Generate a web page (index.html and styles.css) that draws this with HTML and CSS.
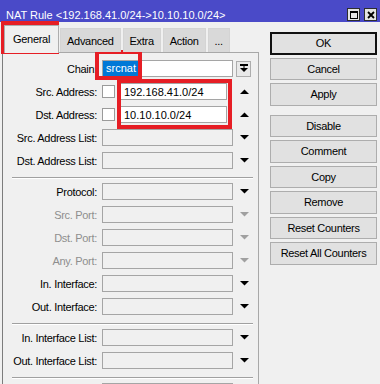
FILE: index.html
```html
<!DOCTYPE html>
<html lang="en">
<head>
    <meta charset="UTF-8">
    <title>NAT Rule</title>
    <link rel="stylesheet" href="styles.css">
</head>
<body>
    <div class="window">
        <div class="titlebar">
            <span class="title">NAT Rule &lt;192.168.41.0/24-&gt;10.10.10.0/24&gt;</span>
            <div class="win-btns">
                <span class="win-btn">
                    <svg width="8" height="8" viewBox="0 0 8 8"><rect x="0.5" y="0.5" width="7" height="7" fill="none" stroke="#000"/><rect x="0" y="0" width="8" height="2" fill="#000"/></svg>
                </span>
                <span class="win-btn">
                    <svg width="8" height="8" viewBox="0 0 8 8"><path d="M1 1L7 7M7 1L1 7" stroke="#000" stroke-width="1.8"/></svg>
                </span>
            </div>
        </div>

        <div class="main">
            <div class="left">
                <div class="tabs">
                    <div class="tab active">General</div>
                    <div class="tab">Advanced</div>
                    <div class="tab">Extra</div>
                    <div class="tab">Action</div>
                    <div class="tab">...</div>
                </div>
                <div class="panel">
                    <div class="row">
                        <span class="lbl">Chain:</span>
                        <span class="field white"><span class="sel">srcnat</span></span>
                        <span class="dd-btn">
                            <svg width="8" height="9" viewBox="0 0 8 9"><rect x="0" y="0" width="8" height="2" fill="#000"/><rect x="3.5" y="2" width="1" height="2" fill="#000"/><polygon points="0,4 8,4 4,8" fill="#000"/></svg>
                        </span>
                    </div>
                    <div class="row">
                        <span class="lbl">Src. Address:</span>
                        <span class="check"></span>
                        <span class="field white addr">192.168.41.0/24</span>
                        <span class="arrow"><svg width="9" height="5" viewBox="0 0 9 5"><polygon points="0,5 9,5 4.5,0.5" fill="#000"/></svg></span>
                    </div>
                    <div class="row">
                        <span class="lbl">Dst. Address:</span>
                        <span class="check"></span>
                        <span class="field white addr">10.10.10.0/24</span>
                        <span class="arrow"><svg width="9" height="5" viewBox="0 0 9 5"><polygon points="0,5 9,5 4.5,0.5" fill="#000"/></svg></span>
                    </div>
                    <div class="row">
                        <span class="lbl">Src. Address List:</span>
                        <span class="field"></span>
                        <span class="arrow"><svg width="9" height="5" viewBox="0 0 9 5"><polygon points="0,0 9,0 4.5,4.5" fill="#000"/></svg></span>
                    </div>
                    <div class="row">
                        <span class="lbl">Dst. Address List:</span>
                        <span class="field"></span>
                        <span class="arrow"><svg width="9" height="5" viewBox="0 0 9 5"><polygon points="0,0 9,0 4.5,4.5" fill="#000"/></svg></span>
                    </div>

                    <div class="sep"></div>

                    <div class="row">
                        <span class="lbl">Protocol:</span>
                        <span class="field"></span>
                        <span class="arrow"><svg width="9" height="5" viewBox="0 0 9 5"><polygon points="0,0 9,0 4.5,4.5" fill="#000"/></svg></span>
                    </div>
                    <div class="row off">
                        <span class="lbl">Src. Port:</span>
                        <span class="field"></span>
                        <span class="arrow"><svg width="9" height="5" viewBox="0 0 9 5"><polygon points="0,0 9,0 4.5,4.5" fill="#a0a0a0"/></svg></span>
                    </div>
                    <div class="row off">
                        <span class="lbl">Dst. Port:</span>
                        <span class="field"></span>
                        <span class="arrow"><svg width="9" height="5" viewBox="0 0 9 5"><polygon points="0,0 9,0 4.5,4.5" fill="#a0a0a0"/></svg></span>
                    </div>
                    <div class="row off">
                        <span class="lbl">Any. Port:</span>
                        <span class="field"></span>
                        <span class="arrow"><svg width="9" height="5" viewBox="0 0 9 5"><polygon points="0,0 9,0 4.5,4.5" fill="#a0a0a0"/></svg></span>
                    </div>
                    <div class="row">
                        <span class="lbl">In. Interface:</span>
                        <span class="field"></span>
                        <span class="arrow"><svg width="9" height="5" viewBox="0 0 9 5"><polygon points="0,0 9,0 4.5,4.5" fill="#000"/></svg></span>
                    </div>
                    <div class="row">
                        <span class="lbl">Out. Interface:</span>
                        <span class="field"></span>
                        <span class="arrow"><svg width="9" height="5" viewBox="0 0 9 5"><polygon points="0,0 9,0 4.5,4.5" fill="#000"/></svg></span>
                    </div>

                    <div class="sep"></div>

                    <div class="row">
                        <span class="lbl">In. Interface List:</span>
                        <span class="field"></span>
                        <span class="arrow"><svg width="9" height="5" viewBox="0 0 9 5"><polygon points="0,0 9,0 4.5,4.5" fill="#000"/></svg></span>
                    </div>
                    <div class="row">
                        <span class="lbl">Out. Interface List:</span>
                        <span class="field"></span>
                        <span class="arrow"><svg width="9" height="5" viewBox="0 0 9 5"><polygon points="0,0 9,0 4.5,4.5" fill="#000"/></svg></span>
                    </div>

                    <div class="sep"></div>

                    <div class="row">
                        <span class="lbl"></span>
                        <span class="field"></span>
                    </div>
                </div>
            </div>

            <div class="actions">
                <button class="btn default">OK</button>
                <button class="btn">Cancel</button>
                <button class="btn">Apply</button>
                <button class="btn group">Disable</button>
                <button class="btn">Comment</button>
                <button class="btn">Copy</button>
                <button class="btn">Remove</button>
                <button class="btn">Reset Counters</button>
                <button class="btn">Reset All Counters</button>
            </div>
        </div>

        <!-- red highlight boxes drawn over the dialog -->
        <div class="mark mark-tab"></div>
        <div class="mark mark-chain"></div>
        <div class="mark mark-addr"></div>
    </div>
</body>
</html>
```

FILE: styles.css
```css
body {
    margin: 0;
    padding: 0;
    background-color: #f0f0f0;
    font-family: "Liberation Sans", Arial, sans-serif;
    font-size: 11px;
    color: #000;
    overflow: hidden;
}

.window {
    position: relative;
    width: 380px;
    height: 384px;
    overflow: hidden;
}

.titlebar {
    height: 22px;
    box-sizing: border-box;
    display: flex;
    align-items: flex-end;
    padding: 0 3px 0 6px;
    background-color: #4a4ac8;
    color: #fff;
}

.title {
    flex: 1;
    line-height: 13px;
}

.win-btns {
    display: flex;
    gap: 4px;
    margin-bottom: 1px;
}

.win-btn {
    width: 13px;
    height: 13px;
    box-sizing: border-box;
    border: 1px solid #2e2e2e;
    background-color: #e4e4e4;
    display: flex;
    align-items: center;
    justify-content: center;
}

.main {
    display: flex;
}

.left {
    width: 257px;
    margin-left: 2px;
}

.tabs {
    display: flex;
    align-items: flex-end;
    height: 30px;
    padding-left: 4px;
    position: relative;
    z-index: 1;
}

.tab {
    height: 24px;
    box-sizing: border-box;
    padding: 0 6px;
    margin-right: 2px;
    border: 1px solid #d4d4d4;
    border-bottom: none;
    background-color: #d9d9d9;
    line-height: 25px;
    letter-spacing: -0.3px;
}

.tab.active {
    height: 28px;
    margin: 0 1px -1px -2px;
    padding: 0 8px;
    border-color: #adadad;
    background-color: #f0f0f0;
    line-height: 27px;
}

.panel {
    height: 340px;
    border: 1px solid #a8a8a8;
    border-left-color: #7c7c7c;
    padding-top: 4px;
}

.row {
    display: flex;
    align-items: center;
    height: 23px;
}

.lbl {
    width: 94px;
    text-align: right;
    letter-spacing: -0.3px;
    white-space: nowrap;
}

.row.off .lbl {
    color: #8e8e8e;
}

.field {
    width: 131px;
    height: 17px;
    box-sizing: border-box;
    margin-left: 5px;
    padding-left: 3px;
    border: 1px solid #a5a5a5;
    background-color: #f0f0f0;
    display: flex;
    align-items: center;
}

.field.white {
    background-color: #fff;
}

.field.addr {
    width: 107px;
    margin-right: 6px;
}

.sel {
    height: 15px;
    line-height: 15px;
    margin-left: -3px;
    padding: 0 3px;
    background-color: #0078d7;
    color: #fff;
}

.check {
    width: 13px;
    height: 13px;
    box-sizing: border-box;
    margin-left: 5px;
    border: 1px solid #9a9a9a;
    background-color: #fff;
}

.arrow {
    width: 17px;
    margin-left: 3px;
    display: flex;
    justify-content: center;
}

.dd-btn {
    width: 15px;
    height: 16px;
    box-sizing: border-box;
    margin-left: 3px;
    border: 1px solid #adadad;
    background-color: #e9e9e9;
    display: flex;
    align-items: center;
    justify-content: center;
}

.sep {
    margin: 5px 5px 1px 9px;
    border-top: 1px solid #a0a0a0;
    border-bottom: 1px solid #fff;
}

.actions {
    width: 107px;
    margin-left: 11px;
    padding-top: 10px;
    display: flex;
    flex-direction: column;
    gap: 3px;
}

.btn {
    height: 22.5px;
    padding: 0;
    border: 1px solid #adadad;
    background-color: #e1e1e1;
    font-family: "Liberation Sans", Arial, sans-serif;
    font-size: 11px;
    letter-spacing: -0.3px;
    color: #000;
}

.btn.default {
    border: 2px solid #111;
}

.btn.group {
    margin-top: 6px;
}

.mark {
    position: absolute;
    box-sizing: border-box;
    border: 4px solid #e61e25;
}

.mark-tab {
    left: 1px;
    top: 21px;
    width: 58px;
    height: 33px;
}

.mark-chain {
    left: 95px;
    top: 50px;
    width: 47px;
    height: 30px;
}

.mark-addr {
    left: 117px;
    top: 79px;
    width: 115px;
    height: 50px;
}
```
